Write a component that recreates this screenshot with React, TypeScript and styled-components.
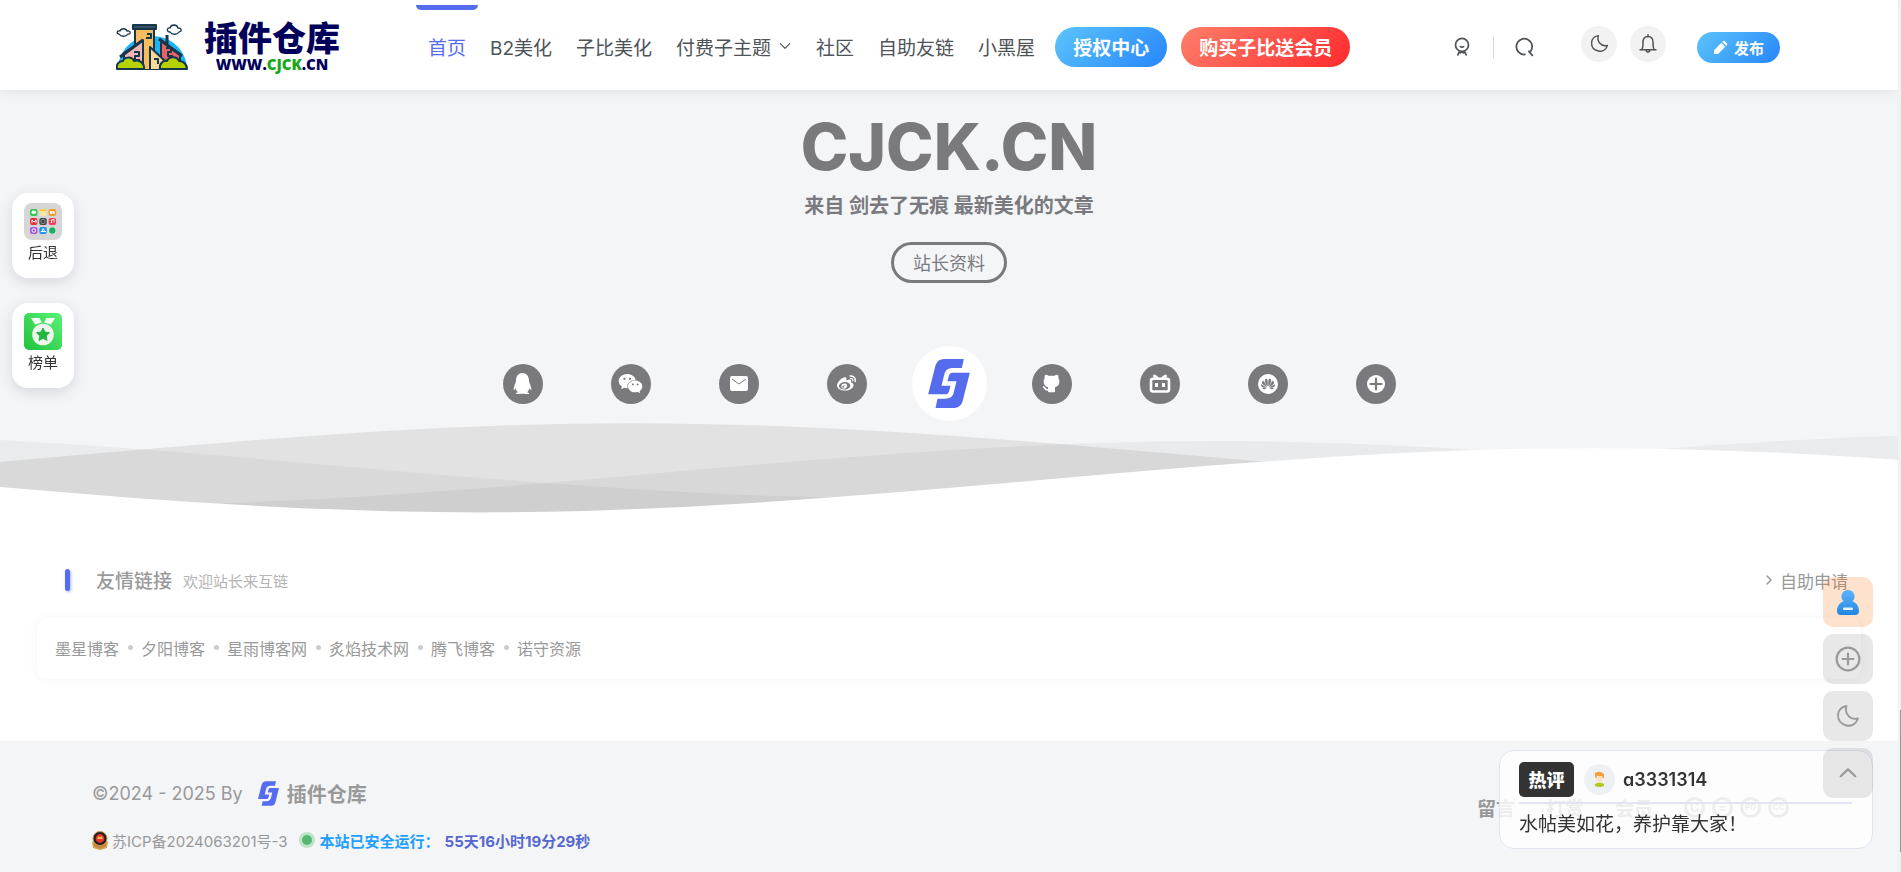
import React from "react";
import styled, { createGlobalStyle, css } from "styled-components";
import { FaQq, FaWeibo } from "react-icons/fa";
import { AiFillWechat } from "react-icons/ai";
import { TbBrandGithubFilled } from "react-icons/tb";
import { SiHuawei } from "react-icons/si";

const ink = "#4e5358";
const muted = "#999";
const slate = "#7a797e";
const accent = "#566cee";
const page = "#f4f5f7";

const GlobalStyle = createGlobalStyle`
  *, *::before, *::after { box-sizing: border-box; }
  body {
    margin: 0;
    background: ${page};
    color: ${ink};
    font-family: Inter, "Noto Sans CJK SC", sans-serif;
    font-size: 16px;
  }
  a { color: inherit; text-decoration: none; }
  button { font: inherit; color: inherit; border: 0; padding: 0; background: none; cursor: pointer; }
  h1, h2, p, ul { margin: 0; padding: 0; }
  ul { list-style: none; }
  svg { display: block; }
`;

const Page = styled.div`
  margin-right: 3px;
`;

const ScrollRail = styled.div`
  position: fixed;
  top: 5px;
  right: 0;
  bottom: 0;
  width: 3px;
  background: #f1f1f1;
  z-index: 20;
`;

const ScrollThumb = styled.div`
  position: absolute;
  right: 0;
  bottom: 20px;
  width: 1px;
  height: 142px;
  background: #999;
`;

/* ---------- header ---------- */

const Header = styled.header`
  position: sticky;
  top: 0;
  z-index: 5;
  display: flex;
  align-items: center;
  height: 90px;
  padding: 5px 118px 1px 116px;
  background: #fff;
  box-shadow: 0 0 14px rgba(80, 90, 100, 0.14);
`;

const Brand = styled.a`
  display: flex;
  align-items: center;
  gap: 16px;
  width: 300px;
  flex-shrink: 0;
`;

const BrandText = styled.span`
  display: flex;
  flex-direction: column;
  align-items: center;
  color: #00005a;
`;

const BrandName = styled.span`
  font-size: 34px;
  line-height: 34px;
  font-weight: 900;
`;

const BrandUrl = styled.span`
  font-family: "Open Sans", sans-serif;
  font-size: 15px;
  line-height: 16px;
  font-weight: 800;
  em { color: #18a818; font-style: normal; }
`;

const Nav = styled.nav`
  display: flex;
  align-self: stretch;
  align-items: center;
`;

const NavLink = styled.a<{ $active?: boolean }>`
  position: relative;
  display: flex;
  align-items: center;
  gap: 7px;
  height: 100%;
  padding: 0 12px 2px;
  font-size: 19px;
  white-space: nowrap;
  color: ${(p) => (p.$active ? accent : ink)};
  ${(p) =>
    p.$active &&
    css`
      &::before {
        content: "";
        position: absolute;
        top: 0;
        left: 0;
        right: 0;
        height: 5px;
        border-radius: 0 0 6px 6px;
        background: ${accent};
      }
    `}
`;

const blueFill = "linear-gradient(135deg, #5cc4fb, #2686fa)";
const redFill = "linear-gradient(135deg, #fd7f6b, #ff2a2d)";

const NavPill = styled.a<{ $fill: string }>`
  display: flex;
  align-items: center;
  height: 40px;
  padding: 0 18px 1px;
  margin-left: 8px;
  & + & { margin-left: 14px; }
  border-radius: 20px;
  background: ${(p) => p.$fill};
  color: #fff;
  font-size: 19px;
  font-weight: 700;
  white-space: nowrap;
`;

const Tools = styled.div`
  display: flex;
  align-items: center;
  margin-left: auto;
`;

const PlainTool = styled.button`
  display: grid;
  place-items: center;
  width: 24px;
  height: 24px;
`;

const ToolDivider = styled.span`
  width: 1px;
  height: 21px;
  margin: 0 18px 0 19px;
  background: #d5d6d8;
`;

const RoundTools = styled.div`
  display: flex;
  gap: 13px;
  margin: 0 31px 7px 45px;
`;

const RoundTool = styled.button`
  display: grid;
  place-items: center;
  width: 36px;
  height: 36px;
  border-radius: 50%;
  background: #f2f2f2;
`;

const Publish = styled.button`
  display: flex;
  align-items: center;
  justify-content: center;
  gap: 6px;
  width: 83px;
  height: 31px;
  border-radius: 16px;
  background: ${blueFill};
  color: #fff;
  font-size: 15px;
  font-weight: 700;
`;

/* ---------- hero ---------- */

const Hero = styled.section`
  display: flex;
  flex-direction: column;
  align-items: center;
  padding-top: 25px;
`;

const Title = styled.h1`
  font-size: 64px;
  line-height: 64px;
  font-weight: 800;
  color: ${slate};
`;

const Subtitle = styled.p`
  margin-top: 12px;
  font-size: 20px;
  line-height: 30px;
  font-weight: 700;
  color: ${slate};
`;

const ProfileLink = styled.a`
  display: flex;
  align-items: center;
  height: 41px;
  margin-top: 21px;
  padding: 0 19px 2px;
  border: 3px solid ${slate};
  border-radius: 21px;
  font-size: 18px;
  color: ${slate};
`;

const SocialRow = styled.div`
  position: relative;
  z-index: 1;
  display: flex;
  align-items: center;
  gap: 45px;
  margin-top: 63px;
`;

const SocialGroup = styled.div`
  display: flex;
  gap: 68px;
`;

const Social = styled.a`
  display: grid;
  place-items: center;
  width: 40px;
  height: 40px;
  border-radius: 50%;
  background: ${slate};
  color: #fff;
`;

const Emblem = styled.div`
  display: grid;
  place-items: center;
  width: 75px;
  height: 75px;
  border-radius: 50%;
  background: #fff;
`;

const Waves = styled.svg`
  width: 100%;
  height: 100px;
  margin-top: -5px;
`;

/* ---------- friend links ---------- */

const Friends = styled.section`
  padding: 49px 37px 62px;
  background: #fff;
`;

const FriendsHead = styled.div`
  display: flex;
  align-items: center;
  height: 30px;
  margin-bottom: 23px;
  padding: 0 13px 0 28px;
  color: ${muted};
`;

const Marker = styled.span`
  width: 5px;
  height: 22px;
  border-radius: 3px;
  background: ${accent};
  box-shadow: 1px 1px 3px rgba(86, 108, 238, 0.5);
`;

const FriendsTitle = styled.h2`
  margin-left: 26px;
  padding-bottom: 2px;
  font-size: 19px;
  font-weight: 500;
`;

const FriendsNote = styled.span`
  margin-left: 11px;
  font-size: 15px;
  color: #b4b4b4;
`;

const Apply = styled.a`
  display: flex;
  align-items: center;
  gap: 5px;
  margin-left: auto;
  font-size: 17px;
`;

const FriendCard = styled.ul`
  display: flex;
  flex-wrap: wrap;
  align-items: center;
  min-height: 61px;
  padding: 0 18px 2px;
  border-radius: 10px;
  background: #fff;
  box-shadow: 0 0 10px rgba(116, 116, 116, 0.09);
`;

const Friend = styled.li`
  display: flex;
  align-items: center;
  font-size: 16px;
  color: ${muted};
  & + &::before {
    content: "";
    width: 5px;
    height: 5px;
    margin: 0 8px 0 9px;
    border-radius: 50%;
    background: #ccc;
  }
`;

/* ---------- footer ---------- */

const Footer = styled.footer`
  display: flex;
  justify-content: space-between;
  padding: 35px 109px 19px 92px;
  background: ${page};
  color: ${muted};
`;

const Copyright = styled.div`
  display: flex;
  align-items: center;
  height: 34px;
  margin-bottom: 18px;
  font-size: 18px;
`;

const FootBrand = styled.a`
  display: flex;
  align-items: center;
  gap: 8px;
  margin-left: 15px;
  font-size: 20px;
  font-weight: 700;
`;

const Records = styled.div`
  display: flex;
  align-items: center;
  height: 24px;
  margin-bottom: 1px;
  font-size: 15px;
`;

const Record = styled.a`
  display: flex;
  align-items: center;
  gap: 4px;
`;

const Pulse = styled.span`
  width: 16px;
  height: 16px;
  margin: 0 5px 0 11px;
  border: 3px solid #bfe3c8;
  border-radius: 50%;
  background: #56b86c;
`;

const Uptime = styled.span`
  color: #1e9fff;
  font-weight: 700;
  time { margin-left: 5px; color: #5468cf; }
`;

const FootLinks = styled.div`
  display: flex;
  align-items: center;
  gap: 31px;
  height: 28px;
  margin-top: 17px;
  font-size: 19px;
  font-weight: 700;
`;

const Licences = styled.span`
  display: flex;
  gap: 7px;
`;

const Licence = styled.span<{ $small?: boolean }>`
  display: grid;
  place-items: center;
  width: 21px;
  height: 21px;
  border: 3px solid ${muted};
  border-radius: 50%;
  font-size: ${(p) => (p.$small ? 8 : 13)}px;
  line-height: 1;
`;

/* ---------- floating parts ---------- */

const LeftDock = styled.aside`
  position: fixed;
  top: 193px;
  left: 12px;
  z-index: 6;
  display: flex;
  flex-direction: column;
  gap: 25px;
`;

const DockCard = styled.button`
  display: flex;
  flex-direction: column;
  align-items: center;
  gap: 2px;
  width: 62px;
  height: 85px;
  padding-top: 10px;
  border-radius: 16px;
  background: #fff;
  box-shadow: 0 4px 14px rgba(60, 70, 90, 0.16);
  color: #333;
  font-size: 15px;
  line-height: 22px;
`;

const SideDock = styled.aside`
  position: fixed;
  right: 28px;
  bottom: 74px;
  z-index: 8;
  display: flex;
  flex-direction: column;
  gap: 7px;
`;

const SideButton = styled.button<{ $warm?: boolean }>`
  display: grid;
  place-items: center;
  width: 50px;
  height: 50px;
  border-radius: 10px;
  background: ${(p) => (p.$warm ? "rgba(255, 111, 6, 0.2)" : "rgba(120, 120, 120, 0.17)")};
  color: ${muted};
`;

const Toast = styled.section`
  position: fixed;
  right: 28px;
  bottom: 23px;
  z-index: 7;
  width: 374px;
  padding: 11px 20px 2px 19px;
  border: 1px solid #dfe4f2;
  border-radius: 15px;
  background: rgba(255, 255, 255, 0.82);
  color: #333;
`;

const ToastHead = styled.div`
  display: flex;
  align-items: center;
  padding-bottom: 5px;
  border-bottom: 2px solid #e0e4f4;
`;

const HotTag = styled.span`
  display: grid;
  place-items: center;
  width: 55px;
  height: 35px;
  margin-right: 10px;
  padding-bottom: 2px;
  border-radius: 5px;
  background: #333;
  color: #fff;
  font-size: 18px;
  font-weight: 900;
`;

const Author = styled.span`
  margin-left: 8px;
  font-size: 18px;
  font-weight: 600;
  font-feature-settings: "cv11";
`;

const ToastText = styled.p`
  font-size: 19px;
  line-height: 42px;
`;

/* ---------- drawings ---------- */

const SiteMark = ({ width, height }: { width: number; height: number }) => (
  <svg width={width} height={height} viewBox="83 87 125 147" fill={accent} aria-hidden="true">
    <path d="M190 87H131C115 87 107 98 104 110L83 193H134C141 193 144 190 146 183L150 167H123L131 135C134 121 141 114 158 114H184Z" />
    <path d="M105 234H161C177 234 184 223 187 211L208 128H157C150 128 147 131 145 138L141 154H168L160 186C157 200 150 206 133 206H111Z" />
  </svg>
);

const TownLogo = () => (
  <svg width="72" height="46" viewBox="0 0 72 46" aria-hidden="true">
    <path d="M2 46C2 27 16 12 36 12s35 15 35 34z" fill="#1cb5f3" />
    <g stroke="#17364a" strokeWidth="2" strokeLinejoin="round">
      <path d="M19 4h19v42H19z" fill="#f6bd5e" />
      <path d="M17 1h23v4H17z" fill="#34506a" />
      <path d="M8 29l19-13v30H8z" fill="#f0b7b8" />
      <path d="M4 33L27 16" fill="none" strokeWidth="3" />
      <path d="M45 17l19 13v16H45z" fill="#e4646b" />
      <path d="M43 15l23 17M51 20v-9" fill="none" strokeWidth="3" />
      <path d="M34 23l15 14v9H34z" fill="#f8d999" />
      <path d="M18 28h5v4h-4v4h5M50 24h5v4h-3v4h5M31 10h4v4h-5M38 35h4v5" fill="none" />
      <path d="M1 45c-1-5 2-8 6-8 1-4 9-5 11 0 6-2 11 3 10 8z" fill="#b5d100" />
      <path d="M44 45c-1-5 3-9 7-8 2-5 10-5 12 0 5 0 8 4 8 8z" fill="#b5d100" />
      <path d="M3 10c-3 0-2-4 1-3 1-3 6-3 7 0 4-1 4 4 1 3-2 3-7 3-9 0zM54 8c-4 0-3-5 0-4 1-4 7-4 8 0 4 0 4 4 1 4-2 3-7 3-9 0z" fill="#fff" strokeWidth="1.3" />
    </g>
  </svg>
);

const Stroke = ({ size, width = 1.6, children }: { size: number; width?: number; children: React.ReactNode }) => (
  <svg
    width={size}
    height={size}
    viewBox="0 0 24 24"
    fill="none"
    stroke="currentColor"
    strokeWidth={width}
    strokeLinecap="round"
    strokeLinejoin="round"
    aria-hidden="true"
  >
    {children}
  </svg>
);

const moonPath = "M10.500 2C8.500 8.500 13 16.500 22 14.500C20 20.500 15 22.500 10.500 21.500C5 20.200 1.800 16 2 11C2.200 6.500 5.500 3 10.500 2Z";

const AppGrid = () => {
  const tiles = ["#35c759", "#f7e5a5", "#f39a2d", "#e0373e", "#44474c", "#f4405b", "#a455d8", "#1f8ef5", "#dff3e6"];
  return (
    <svg width="38" height="37" viewBox="0 0 38 37" aria-hidden="true">
      <rect width="38" height="37" rx="8" fill="#d6d6d6" />
      {tiles.map((fill, i) => (
        <rect key={fill} x={6 + (i % 3) * 9.3} y={6 + Math.floor(i / 3) * 9} width="7.5" height="7" rx="2" fill={fill} />
      ))}
      <ellipse cx="9.8" cy="9.3" rx="2.3" ry="1.7" fill="#fff" />
      <path d="M15.800 7.200h6.800" stroke="#fbbf2d" strokeWidth="1.5" />
      <path d="M26 8h2v3h-2zM28.600 8h2v3h-2z" fill="#fff" />
      <path d="M8 20v-3l2 2 2-2v3" stroke="#fff" fill="none" />
      <circle cx="19" cy="18.5" r="2.2" stroke="#8b8f94" fill="none" />
      <path d="M27.500 20v-3l2.500-.6v3" stroke="#fff" fill="none" />
      <circle cx="9.8" cy="27.5" r="1.8" stroke="#fff" fill="none" />
      <path d="M17.300 29.300l1.900-3.800 1.900 3.800M16.800 28.500h5" stroke="#fff" fill="none" />
      <circle cx="28.3" cy="27.5" r="3.2" fill="#20ae66" />
    </svg>
  );
};

const Medal = () => (
  <svg width="38" height="37" viewBox="0 0 38 37" aria-hidden="true">
    <defs>
      <linearGradient id="medal" x1="0" y1="1" x2="1" y2="0">
        <stop offset="0" stopColor="#1fc23c" />
        <stop offset="1" stopColor="#5bf277" />
      </linearGradient>
    </defs>
    <rect width="38" height="37" rx="5" fill="url(#medal)" />
    <path d="M7 5h8.500l2.500 4.500-7 2zM31 5h-8.500l-2.500 4.500 7 2z" fill="#f4fff4" />
    <circle cx="19" cy="21.5" r="10.8" fill="#f0f5f0" />
    <path d="M19 15l2 4.100 4.500.6-3.300 3.200.8 4.500-4-2.100-4 2.100.8-4.500-3.300-3.200 4.500-.6z" fill="#22b540" stroke="#22b540" strokeLinejoin="round" />
  </svg>
);

const PoliceBadge = () => (
  <svg width="16" height="19" viewBox="0 0 16 19" aria-hidden="true">
    <path d="M0 11l3-2h10l3 2-1 6-7 2-7-2z" fill="#d7a052" />
    <circle cx="8" cy="7.5" r="7" fill="#22201f" stroke="#c99a4c" />
    <circle cx="8" cy="7.5" r="4.4" fill="#e2362e" />
    <path d="M5 8l1.500-3L8 6.500 9.500 5 11 8z" fill="#f3c04d" />
    <path d="M2 12l6 3 6-3v3l-6 3-6-3z" fill="#c28a3c" />
  </svg>
);

const Avatar = () => (
  <svg width="31" height="31" viewBox="0 0 31 31" aria-hidden="true">
    <circle cx="15.5" cy="15.5" r="15.5" fill="#edf1f4" />
    <path d="M11 20q4.500-3 9 0v2q-4.500 2-9 0z" fill="#b2c61c" />
    <path d="M12 12h7v4q-3.500 5-7 0z" fill="#fbe0c9" />
    <path d="M11 14V9q5-3 9 1v4h-1l-1-2h-5l-1 2z" fill="#f7a13e" />
  </svg>
);

const Member = () => (
  <svg width="24" height="25" viewBox="0 0 24 25" aria-hidden="true">
    <defs>
      <linearGradient id="member" x1="0" y1="0" x2="0" y2="1">
        <stop offset="0" stopColor="#5eb5fb" />
        <stop offset="1" stopColor="#2386e2" />
      </linearGradient>
    </defs>
    <path d="M12 0a6.500 6.500 0 0 1 4.500 11.200C21 13 23 17 23 21q0 4-4 4H5q-4 0-4-4c0-4 2-8 6.500-9.800A6.500 6.500 0 0 1 12 0z" fill="url(#member)" />
    <rect x="7" y="17.5" width="10" height="2.5" rx="1" fill="#e6f3ff" />
  </svg>
);

const Disc = styled.span`
  display: grid;
  place-items: center;
  width: 20px;
  height: 20px;
  border-radius: 50%;
  background: #fff;
  color: ${slate};
`;

const friends = ["墨星博客", "夕阳博客", "星雨博客网", "炙焰技术网", "腾飞博客", "诺守资源"];
const wave = "M-160 44c30 0 58-18 88-18s58 18 88 18 58-18 88-18 58 18 88 18v44h-352z";

export default function App() {
  return (
    <>
      <GlobalStyle />
      <Page>
        <Header>
          <Brand href="#">
            <TownLogo />
            <BrandText>
              <BrandName>插件仓库</BrandName>
              <BrandUrl>
                WWW.<em>CJCK</em>.CN
              </BrandUrl>
            </BrandText>
          </Brand>
          <Nav>
            <NavLink href="#" $active>首页</NavLink>
            <NavLink href="#">B2美化</NavLink>
            <NavLink href="#">子比美化</NavLink>
            <NavLink href="#">
              付费子主题
              <Stroke size={14} width={2}><path d="M4 8l8 8 8-8" /></Stroke>
            </NavLink>
            <NavLink href="#">社区</NavLink>
            <NavLink href="#">自助友链</NavLink>
            <NavLink href="#">小黑屋</NavLink>
            <NavPill href="#" $fill={blueFill}>授权中心</NavPill>
            <NavPill href="#" $fill={redFill}>购买子比送会员</NavPill>
          </Nav>
          <Tools>
            <PlainTool aria-label="会员">
              <Stroke size={20} width={2}>
                <circle cx="12" cy="9.5" r="7.8" />
                <path d="M10 11.500q2 1.500 4 0M8.800 17.500L7 21.500M15.200 17.500l1.800 4M10 19q2-1.500 4 0" />
              </Stroke>
            </PlainTool>
            <ToolDivider />
            <PlainTool aria-label="搜索">
              <Stroke size={21} width={2}>
                <path d="M12.500 20a9 9 0 1 1 5.500-2.500M17 16.500l4 4.500" />
              </Stroke>
            </PlainTool>
            <RoundTools>
              <RoundTool aria-label="夜间模式">
                <Stroke size={19} width={1.8}><path d={moonPath} /></Stroke>
              </RoundTool>
              <RoundTool aria-label="消息">
                <Stroke size={20} width={1.8}>
                  <path d="M12 1v1.500M2.500 19h19M4.500 19Q6 17 6 10q0-7 6-7t6 7q0 7 1.500 9M10 20.500q2 2.500 4 0" />
                </Stroke>
              </RoundTool>
            </RoundTools>
            <Publish>
              <svg width="15" height="15" viewBox="0 0 15 15" fill="currentColor" aria-hidden="true">
                <path d="M8.300 2.700l4 4-7 7q-.4.400-1 .4H1v-3.300q0-.5.400-.9zM9.200 1.800L10 1q.8-.7 1.600 0L14 3.400q.7.800 0 1.600l-.8.800z" />
              </svg>
              发布
            </Publish>
          </Tools>
        </Header>

        <main>
          <Hero>
            <Title>CJCK.CN</Title>
            <Subtitle>来自 剑去了无痕 最新美化的文章</Subtitle>
            <ProfileLink href="#">站长资料</ProfileLink>
            <SocialRow>
              <SocialGroup>
                <Social href="#" aria-label="QQ"><FaQq size={21} /></Social>
                <Social href="#" aria-label="微信"><AiFillWechat size={27} /></Social>
                <Social href="#" aria-label="邮箱">
                  <svg width="18" height="15" viewBox="0 0 18 15" aria-hidden="true">
                    <rect width="18" height="15" rx="2" fill="#fff" />
                    <path d="M2 3l7 5 7-5" fill="none" stroke={slate} />
                  </svg>
                </Social>
                <Social href="#" aria-label="微博"><FaWeibo size={19} /></Social>
              </SocialGroup>
              <Emblem><SiteMark width={42} height={49} /></Emblem>
              <SocialGroup>
                <Social href="#" aria-label="GitHub"><TbBrandGithubFilled size={21} /></Social>
                <Social href="#" aria-label="哔哩哔哩">
                  <svg width="22" height="20" viewBox="0 0 22 20" fill="none" stroke="#fff" aria-hidden="true">
                    <path d="M5.500 2L8 4M16.500 2L14 4" strokeWidth="3" strokeLinecap="round" />
                    <rect x="2" y="4.8" width="18" height="12.7" rx="2" strokeWidth="2.6" />
                    <path d="M7.500 9v4M14.500 9v4" strokeWidth="3" />
                  </svg>
                </Social>
                <Social href="#" aria-label="华为">
                  <Disc><SiHuawei size={14} /></Disc>
                </Social>
                <Social href="#" aria-label="更多">
                  <svg width="18" height="18" viewBox="0 0 18 18" aria-hidden="true">
                    <circle cx="9" cy="9" r="9" fill="#fff" />
                    <path d="M9 3.500v11M3.500 9h11" stroke={slate} strokeWidth="2.2" strokeLinecap="round" />
                  </svg>
                </Social>
              </SocialGroup>
            </SocialRow>
            <Waves viewBox="0 24 150 28" preserveAspectRatio="none" aria-hidden="true">
              <defs><path id="wave" d={wave} /></defs>
              <use href="#wave" x="122" y="0" fill="#e2e2e2" />
              <use href="#wave" x="55" y="3" fill="rgba(0,0,0,.04)" />
              <use href="#wave" x="-8" y="5" fill="rgba(0,0,0,.045)" />
              <use href="#wave" x="22" y="7" fill="#fff" />
            </Waves>
          </Hero>

          <Friends>
            <FriendsHead>
              <Marker />
              <FriendsTitle>友情链接</FriendsTitle>
              <FriendsNote>欢迎站长来互链</FriendsNote>
              <Apply href="#">
                <Stroke size={12} width={3}><path d="M8 4l8 8-8 8" /></Stroke>
                自助申请
              </Apply>
            </FriendsHead>
            <FriendCard>
              {friends.map((name) => (
                <Friend key={name}><a href="#">{name}</a></Friend>
              ))}
            </FriendCard>
          </Friends>
        </main>

        <Footer>
          <div>
            <Copyright>
              ©2024 - 2025 By
              <FootBrand href="#">
                <SiteMark width={21} height={25} />
                插件仓库
              </FootBrand>
            </Copyright>
            <Records>
              <Record href="#"><PoliceBadge />苏ICP备2024063201号-3</Record>
              <Pulse />
              <Uptime>本站已安全运行：<time>55天16小时19分29秒</time></Uptime>
            </Records>
          </div>
          <FootLinks>
            <a href="#">留言</a>
            <a href="#">打赏</a>
            <a href="#">会员</a>
            <Licences>
              <Licence>C</Licence>
              <Licence>=</Licence>
              <Licence $small>PD</Licence>
              <Licence $small>CC</Licence>
            </Licences>
          </FootLinks>
        </Footer>
      </Page>

      <LeftDock>
        <DockCard><AppGrid />后退</DockCard>
        <DockCard><Medal />榜单</DockCard>
      </LeftDock>

      <Toast>
        <ToastHead>
          <HotTag>热评</HotTag>
          <Avatar />
          <Author>a3331314</Author>
        </ToastHead>
        <ToastText>水帖美如花，养护靠大家！</ToastText>
      </Toast>

      <SideDock>
        <SideButton $warm aria-label="会员中心"><Member /></SideButton>
        <SideButton aria-label="新建">
          <Stroke size={26} width={2}><circle cx="12" cy="12" r="10.5" /><path d="M12 7v10M7 12h10" /></Stroke>
        </SideButton>
        <SideButton aria-label="夜间模式"><Stroke size={24} width={1.8}><path d={moonPath} /></Stroke></SideButton>
        <SideButton aria-label="返回顶部"><Stroke size={22} width={2.4}><path d="M4 15.500L12 8l8 7.500" /></Stroke></SideButton>
      </SideDock>

      <ScrollRail><ScrollThumb /></ScrollRail>
    </>
  );
}
